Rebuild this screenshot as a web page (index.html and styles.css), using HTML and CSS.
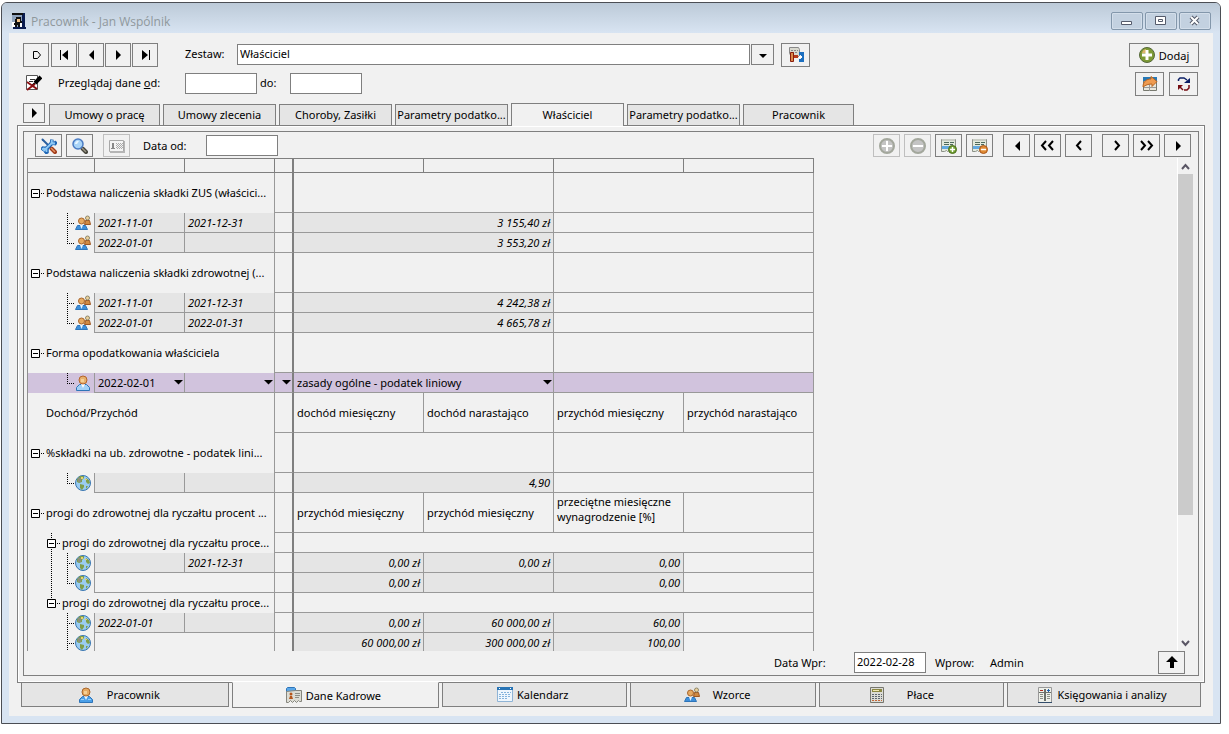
FILE: index.html
```html
<!DOCTYPE html>
<html lang="pl">
<head>
    <meta charset="UTF-8">
    <meta name="viewport" content="width=device-width, initial-scale=1.0">
    <title>Pracownik - Jan Wspólnik</title>
    <link rel="stylesheet" href="styles.css">
</head>
<body>
    <!-- Icon set -->
    <svg class="sprite" aria-hidden="true">
        <symbol id="app" viewBox="0 0 16 16">
            <path fill="#8fa3bd" d="M1 1h11v13H1z"/>
            <path fill="#0a1c50" d="M11 0h3v14h1v2H2v-2h9z"/>
            <path fill="#111" d="M1 0h11v2H1zM5 4h5v4h1v2H4V6h1z"/>
            <path fill="#f5c58a" d="M6 6h3v3H6z"/>
            <path fill="#fff" d="M1 9h3v5H1zM9 10h2v4H9z"/>
            <path fill="#111" d="M3 10h6v2H3zM4 12h2v2H4zM7 12h2v2H7z"/>
        </symbol>
        <symbol id="play" viewBox="0 0 16 16"><path d="M6 3v10l5-5z"/></symbol>
        <symbol id="back" viewBox="0 0 16 16"><path d="M11 3v10L6 8z"/></symbol>
        <symbol id="first" viewBox="0 0 16 16"><path d="M4 3h1v10H4zM12 3v10L6 8z"/></symbol>
        <symbol id="last" viewBox="0 0 16 16"><path d="M12 3h1v10h-1zM5 3v10l6-5z"/></symbol>
        <symbol id="start" viewBox="0 0 16 16"><path fill="none" stroke="#000" d="M5.500 4.500h4l3 3.500-3 3.500h-4z"/></symbol>
        <symbol id="down" viewBox="0 0 16 16"><path d="M4 7h8l-4 4z"/></symbol>
        <symbol id="up-arrow" viewBox="0 0 16 16"><path d="M8 2l6 6h-4v6H6V8H2z"/></symbol>
        <symbol id="lt" viewBox="0 0 16 16"><path fill="none" stroke="#000" stroke-width="2" d="M10 3L6 7.500l4 4.500"/></symbol>
        <symbol id="gt" viewBox="0 0 16 16"><path fill="none" stroke="#000" stroke-width="2" d="M7 3l4 4.500L7 12"/></symbol>
        <symbol id="ltlt" viewBox="0 0 16 16"><path fill="none" stroke="#000" stroke-width="2" d="M6 3L2 7.500 6 12M13 3L9 7.500l4 4.500"/></symbol>
        <symbol id="gtgt" viewBox="0 0 16 16"><path fill="none" stroke="#000" stroke-width="2" d="M2 3l4 4.500L2 12M9 3l4 4.500L9 12"/></symbol>
        <symbol id="set" viewBox="0 0 16 16">
            <path fill="#d9d9cf" stroke="#888" d="M1.500.500h9l1 2v7h-8l-2-3z"/>
            <path stroke="#888" stroke-dasharray="2 1" d="M3 3.500h7M4 5.500h5"/>
            <path fill="#d98a4b" stroke="#8a1c0c" d="M2.500 5.500h3v9h-3z"/>
            <path fill="#b5391a" d="M6 8h4v3H6z"/>
            <path fill="#1c6fc0" d="M11 5h5v10h-5v-3h2V8h-2z"/>
            <path fill="#fff" d="M11 9h3v2h-3z"/>
        </symbol>
        <symbol id="filter-off" viewBox="0 0 16 16">
            <path fill="#fff" stroke="#555" d="M.500.500h11v14H.500z"/>
            <path stroke="#333" d="M4 4.500h5M3 6.500h4"/>
            <path stroke="#000" stroke-width="4" d="M15 2L9 8"/>
            <path stroke="#000" stroke-width="2" d="M9 8l-3 3"/>
            <path stroke="#8b0f12" stroke-width="2" d="M1 7l10 7M9 9l-8 6"/>
        </symbol>
        <symbol id="add" viewBox="0 0 16 16">
            <circle cx="8" cy="8" r="7.500" fill="#7d9a35" stroke="#55683a"/>
            <path fill="#dbb56a" d="M3 6a5 5 0 0 1 4-4v4z"/>
            <path stroke="#fff" stroke-width="3" d="M8 3v10M3 8h10"/>
        </symbol>
        <symbol id="add-off" viewBox="0 0 16 16">
            <circle cx="8" cy="8" r="7" fill="#c4c4c4" stroke="#a3a79c" stroke-width="2"/>
            <path stroke="#fff" stroke-width="2" d="M8 3v10M3 8h10"/>
        </symbol>
        <symbol id="remove-off" viewBox="0 0 16 16">
            <circle cx="8" cy="8" r="7" fill="#c4c4c4" stroke="#a3a79c" stroke-width="2"/>
            <path stroke="#fff" stroke-width="2" d="M3 8h10"/>
        </symbol>
        <symbol id="note" viewBox="0 0 16 16">
            <path fill="#e3eadd" stroke="#8c9188" d="M.500 1.500h14v12h-2l-1-1-2 1-1-1-2 1-1-1-2 1H.500z"/>
            <path fill="#c9cdc4" d="M1 1h13v2H1z"/>
            <path stroke="#4f6a5c" stroke-dasharray="5 1" d="M3 4.500h10M3 6.500h9"/>
            <path stroke="#62a9e0" stroke-width="3" d="M1 9.500h9"/>
        </symbol>
        <symbol id="note-add" viewBox="0 0 16 16">
            <use href="#note"/>
            <circle cx="11.500" cy="11.500" r="4" fill="#71a12f" stroke="#4c6e20"/>
            <path stroke="#fff" stroke-width="1.500" d="M11.500 9v5M9 11.500h5"/>
        </symbol>
        <symbol id="note-remove" viewBox="0 0 16 16">
            <use href="#note"/>
            <circle cx="11.500" cy="11.500" r="4" fill="#e08a32" stroke="#a8541a"/>
            <path stroke="#fff" stroke-width="1.500" d="M9 11.500h5"/>
        </symbol>
        <symbol id="export" viewBox="0 0 16 16">
            <path fill="#e9e7dc" stroke="#77796f" d="M1.500 1.500h13v13h-13z"/>
            <path fill="#2678b6" d="M1 1h14v4H1z"/>
            <path stroke="#999" d="M2 11.500h12M7.500 8v7"/>
            <path fill="#ef9b50" stroke="#b8641f" d="M1 11c0-6 4-8 8-8V.500l6 5-5 5V8C6 8 4 9 1 11z"/>
        </symbol>
        <symbol id="refresh" viewBox="0 0 16 16">
            <path fill="none" stroke="#0b1f66" stroke-width="1.500" d="M2.500 5V3.500l1.500-1.500h4l3 2"/>
            <path fill="#0b1f66" d="M14 2v5H8z"/>
            <path fill="none" stroke="#750d12" stroke-width="1.500" d="M13 9v3l-2 2H8"/>
            <path fill="none" stroke="#750d12" stroke-width="1.500" d="M3 10l4 4"/>
            <path fill="#750d12" d="M2 9h5l-5 5z"/>
        </symbol>
        <symbol id="tools" viewBox="0 0 16 16">
            <path stroke="#2a5f9e" stroke-width="2" stroke-linecap="round" d="M1.500 1.500L9 9"/>
            <path stroke="#a03a18" stroke-width="4" stroke-linecap="round" d="M10.500 10.500L14 14"/>
            <path stroke="#e39464" stroke-width="1.500" d="M10 10l4 4"/>
            <path stroke="#1f66b5" stroke-width="4" d="M2.500 13.500L12 4"/>
            <path fill="none" stroke="#1f66b5" stroke-width="3.500" d="M11 1.500L10.500 5l3.500.500 1.500-2M.500 12L2 10l4 .500L6 14l-2 1.500"/>
            <path fill="none" stroke="#8fc9f5" stroke-width="1.800" d="M2.500 13L12 4M11 2l-.500 3 3.500.500M1 11.500L2.500 10.500l3 .500L5.500 14"/>
        </symbol>
        <symbol id="search" viewBox="0 0 16 16">
            <path stroke="#46443a" stroke-width="4" stroke-linecap="round" d="M10.500 10.500L14 14"/>
            <path stroke="#9b9787" stroke-width="1.500" d="M10 10l4 4"/>
            <circle cx="6" cy="6" r="5" fill="#a9d4f7" stroke="#4b7cc4" stroke-width="1.500"/>
            <path fill="#e9f6ff" d="M3 6a3 3 0 0 1 4-3l-2 3z"/>
        </symbol>
        <symbol id="card-off" viewBox="0 0 16 16">
            <path fill="#f4f4f4" stroke="#a8a8a8" d="M.500 2.500h14v11H.500z"/>
            <path stroke="#b5b5b5" stroke-width="2" d="M1 14h15V3"  fill="none"/>
            <path fill="#888" d="M3 5h2v5h1v1H2v-1h1z"/>
            <path stroke="#aaa" stroke-dasharray="1 1" d="M7 5.500h7M8 6.500h6M7 7.500h7M8 8.500h6M7 9.500h7M8 10.500h6"/>
        </symbol>
        <symbol id="person" viewBox="0 0 16 16">
            <path fill="#4a9fe8" stroke="#2e74b8" d="M1.500 15.500v-3l3-3h7l3 3v3z"/>
            <path fill="#e9f4fd" d="M6 9h4l-2 4z"/>
            <path stroke="#9bd0fa" d="M3 12.500h3M10 12.500h3"/>
            <circle cx="8" cy="5" r="4" fill="#e6aa62" stroke="#a9662c"/>
            <path fill="#f6cf95" d="M6 4h3v3H6z"/>
        </symbol>
        <symbol id="person-light" viewBox="0 0 16 16">
            <path fill="#a3d1f7" stroke="#2e74b8" d="M1.500 15.500v-3l3-3h7l3 3v3z"/>
            <path fill="#fff" d="M6 9h4l-2 4z"/>
            <circle cx="8" cy="5" r="4" fill="#e6b06e" stroke="#b5652a"/>
            <path fill="#f6cf95" d="M6 4h3v3H6z"/>
        </symbol>
        <symbol id="people" viewBox="0 0 16 16">
            <path fill="#d08a42" stroke="#9c5620" d="M9.500 9.500l1-4h4l1 4z"/>
            <circle cx="12.500" cy="3" r="2" fill="#ead09c" stroke="#8f8769"/>
            <path fill="#3d8fdb" stroke="#2e74b8" d="M.500 14.500l2-4h8l2 4z"/>
            <path fill="#e9f4fd" d="M5 10h3l-1.500 4z"/>
            <circle cx="6.500" cy="6" r="3" fill="#e6aa62" stroke="#a9662c"/>
        </symbol>
        <symbol id="globe" viewBox="0 0 16 16">
            <circle cx="8" cy="8" r="7.500" fill="#9accf2" stroke="#3976b0"/>
            <path fill="#7e9e4e" d="M2 4l3-3h4v2L7 5v2L4 8 2 7zM11 3l3 2 1 3-2 1-2-2zM5 9l4 1v2l-2 3-2-2zM11 11h2l-2 3z"/>
            <path fill="#e9d36a" d="M6 2h2v2H6zM10 4h2v1h-2z"/>
            <path fill="#8b8f7c" d="M3 3h3v4H3z"/>
        </symbol>
        <symbol id="file" viewBox="0 0 16 16">
            <path fill="#5aa7e8" stroke="#2e74b8" d="M.500 13.500v-12l1-1h7l1 1v4z"/>
            <path fill="#dcdcd4" stroke="#85857d" d="M.500 4.500l9-1h6v11h-2l-1-1-2 2-2-2-2 2-2-2-2 2h-2z"/>
            <circle cx="5" cy="7" r="1.500" fill="#b5561b"/>
            <path fill="#b5561b" d="M3 12l1-3h2l1 3z"/>
            <path stroke="#8d8d85" d="M9 6.500h5M9 8.500h5M9 10.500h4"/>
        </symbol>
        <symbol id="calendar" viewBox="0 0 16 16">
            <path fill="#eef6fd" stroke="#8fb4d6" d="M.500.500h15v14H.500z"/>
            <path fill="#2874b5" d="M0 0h16v3H0z"/>
            <path stroke="#fff" d="M2 1.500h1M13 1.500h1"/>
            <path stroke="#84b3dc" stroke-dasharray="2 1" d="M4 5.500h10M2 7.500h12M2 9.500h12M2 11.500h9"/>
        </symbol>
        <symbol id="calc" viewBox="0 0 16 16">
            <path fill="#dcdcd6" stroke="#77776f" d="M1.500.500h13v15h-13z"/>
            <path fill="#8b8742" d="M3 2h10v3H3z"/>
            <path fill="#f3e9b0" d="M4 3h6v1H4z"/>
            <path stroke="#5d6670" stroke-dasharray="2 1" d="M3 7.500h10M3 9.500h10M3 11.500h10"/>
            <path stroke="#c4683a" stroke-dasharray="2 1" d="M3 13.500h10"/>
        </symbol>
        <symbol id="ledger" viewBox="0 0 16 16">
            <path fill="#eef0ea" stroke="#999" d="M1.500.500h13v15h-13z"/>
            <path fill="#6d716c" d="M7 2h2v12H7zM2 5h12v1H2z"/>
            <path stroke="#b32a1b" d="M3 3.500h3"/>
            <path stroke="#1c5fae" d="M10 3.500h3M11.500 2v3"/>
            <path stroke="#8a8f88" d="M3 7.500h3M3 9.500h3M3 11.500h3M10 7.500h3M10 9.500h3M10 11.500h3"/>
            <path stroke="#334d6b" d="M1 15.500h14"/>
        </symbol>
        <!-- Tree lines -->
        <g id="dots-mid" stroke="#000" stroke-dasharray="1 1"><path d="M39.500 0v20M41 10.500h6"/></g>
        <g id="dots-end" stroke="#000" stroke-dasharray="1 1"><path d="M39.500 0v11M41 10.500h6"/></g>
        <g id="dots-outer" stroke="#000" stroke-dasharray="1 1"><path d="M23.500 0v20"/></g>
        <symbol id="minus-box" viewBox="0 0 14 10">
            <path fill="#fff" stroke="#000" d="M.500.500h8v8h-8z"/>
            <path stroke="#000" d="M2 4.500h5"/>
            <path stroke="#000" stroke-dasharray="1 1" d="M10 4.500h3"/>
        </symbol>
    </svg>

    <div class="window">
        <header class="title-bar">
            <svg class="icon"><use href="#app"/></svg>
            <h1>Pracownik - Jan Wspólnik</h1>
            <div class="window-buttons">
                <button type="button" aria-label="Minimalizuj"><svg width="12" height="12"><path fill="#fff" stroke="#555b6b" d="M.500 6.500h10v3H.500z"/></svg></button>
                <button type="button" aria-label="Maksymalizuj"><svg width="12" height="12"><path fill="#fff" stroke="#555b6b" d="M.500 1.500h10v8H.500zM3.500 4.500h4v2h-4z"/></svg></button>
                <button type="button" aria-label="Zamknij"><svg width="12" height="12"><path stroke="#555b6b" stroke-width="4" d="M2 2l7 7M9 2L2 9"/><path stroke="#fff" stroke-width="2" d="M2 2l7 7M9 2L2 9"/></svg></button>
            </div>
        </header>

        <main class="content">
            <div class="toolbar">
                <div class="row">
                    <div class="nav-buttons">
                        <button type="button" class="btn start" aria-label="Początek"><svg class="icon"><use href="#start"/></svg></button>
                        <button type="button" class="btn" aria-label="Pierwszy"><svg class="icon"><use href="#first"/></svg></button>
                        <button type="button" class="btn" aria-label="Poprzedni"><svg class="icon"><use href="#back"/></svg></button>
                        <button type="button" class="btn" aria-label="Następny"><svg class="icon"><use href="#play"/></svg></button>
                        <button type="button" class="btn" aria-label="Ostatni"><svg class="icon"><use href="#last"/></svg></button>
                    </div>
                    <label class="set-label" for="zestaw">Zestaw:</label>
                    <input class="field set-field" id="zestaw" type="text" value="Właściciel">
                    <button type="button" class="btn drop" aria-label="Rozwiń"><svg class="icon"><use href="#down"/></svg></button>
                    <button type="button" class="btn wide" aria-label="Zestawy"><svg class="icon"><use href="#set"/></svg></button>
                    <button type="button" class="btn add push"><svg class="icon"><use href="#add"/></svg>Dodaj</button>
                </div>
                <div class="row">
                    <svg class="icon filter"><use href="#filter-off"/></svg>
                    <label class="from-label" for="od">Przeglądaj dane <u>o</u>d:</label>
                    <input class="field date" id="od" type="text">
                    <label class="to-label" for="do">do:</label>
                    <input class="field date" id="do" type="text">
                    <div class="side-buttons push">
                        <button type="button" class="btn wide" aria-label="Eksport"><svg class="icon"><use href="#export"/></svg></button>
                        <button type="button" class="btn wide" aria-label="Odśwież"><svg class="icon"><use href="#refresh"/></svg></button>
                    </div>
                </div>
            </div>

            <nav class="tabs">
                <button type="button" class="btn tab-scroll" aria-label="Przewiń zakładki"><svg class="icon"><use href="#play"/></svg></button>
                <button type="button" class="tab narrow">Umowy o pracę</button>
                <button type="button" class="tab">Umowy zlecenia</button>
                <button type="button" class="tab">Choroby, Zasiłki</button>
                <button type="button" class="tab">Parametry podatko...</button>
                <button type="button" class="tab active">Właściciel</button>
                <button type="button" class="tab">Parametry podatko...</button>
                <button type="button" class="tab narrow">Pracownik</button>
            </nav>

            <section class="panel">
                <div class="inner">
                    <div class="grid-tools">
                        <button type="button" class="btn tool" aria-label="Narzędzia"><svg class="icon"><use href="#tools"/></svg></button>
                        <button type="button" class="btn tool" aria-label="Szukaj"><svg class="icon"><use href="#search"/></svg></button>
                        <button type="button" class="btn tool spaced" disabled aria-label="Karta"><svg class="icon"><use href="#card-off"/></svg></button>
                        <label class="date-label" for="data-od">Data od:</label>
                        <input class="field date" id="data-od" type="text">
                        <button type="button" class="btn tool push" disabled aria-label="Dodaj wiersz"><svg class="icon"><use href="#add-off"/></svg></button>
                        <button type="button" class="btn tool" disabled aria-label="Usuń wiersz"><svg class="icon"><use href="#remove-off"/></svg></button>
                        <button type="button" class="btn tool" aria-label="Dodaj zapis"><svg class="icon"><use href="#note-add"/></svg></button>
                        <button type="button" class="btn tool" aria-label="Usuń zapis"><svg class="icon"><use href="#note-remove"/></svg></button>
                        <button type="button" class="btn tool spaced" aria-label="Na początek"><svg class="icon"><use href="#back"/></svg></button>
                        <button type="button" class="btn tool" aria-label="Strona wstecz"><svg class="icon"><use href="#ltlt"/></svg></button>
                        <button type="button" class="btn tool" aria-label="Wstecz"><svg class="icon"><use href="#lt"/></svg></button>
                        <button type="button" class="btn tool spaced" aria-label="Dalej"><svg class="icon"><use href="#gt"/></svg></button>
                        <button type="button" class="btn tool" aria-label="Strona dalej"><svg class="icon"><use href="#gtgt"/></svg></button>
                        <button type="button" class="btn tool" aria-label="Na koniec"><svg class="icon"><use href="#play"/></svg></button>
                    </div>

                    <div class="grid-area">
                        <table class="grid">
                            <colgroup>
                                <col class="c-tree"><col class="c-date"><col class="c-date"><col class="c-mark">
                                <col class="c-val"><col class="c-val"><col class="c-val"><col class="c-val">
                            </colgroup>
                            <thead>
                                <tr><th></th><th></th><th></th><th class="split"></th><th></th><th></th><th></th><th></th></tr>
                            </thead>
                            <tbody>
                                <tr class="group">
                                    <td class="name" colspan="3"><div class="node"><svg class="box"><use href="#minus-box"/></svg>Podstawa naliczenia składki ZUS (właścici...</div></td>
                                    <td class="split"></td><td colspan="2"></td><td colspan="2"></td>
                                </tr>
                                <tr>
                                    <td class="tree"><svg class="branch"><use href="#dots-mid"/></svg><svg class="icon"><use href="#people"/></svg></td>
                                    <td class="gray">2021-11-01</td><td class="gray">2021-12-31</td>
                                    <td class="split"></td><td class="gray num" colspan="2">3 155,40 zł</td><td colspan="2"></td>
                                </tr>
                                <tr>
                                    <td class="tree"><svg class="branch"><use href="#dots-end"/></svg><svg class="icon"><use href="#people"/></svg></td>
                                    <td class="gray">2022-01-01</td><td class="gray"></td>
                                    <td class="split"></td><td class="gray num" colspan="2">3 553,20 zł</td><td colspan="2"></td>
                                </tr>

                                <tr class="group">
                                    <td class="name" colspan="3"><div class="node"><svg class="box"><use href="#minus-box"/></svg>Podstawa naliczenia składki zdrowotnej (...</div></td>
                                    <td class="split"></td><td colspan="2"></td><td colspan="2"></td>
                                </tr>
                                <tr>
                                    <td class="tree"><svg class="branch"><use href="#dots-mid"/></svg><svg class="icon"><use href="#people"/></svg></td>
                                    <td class="gray">2021-11-01</td><td class="gray">2021-12-31</td>
                                    <td class="split"></td><td class="gray num" colspan="2">4 242,38 zł</td><td colspan="2"></td>
                                </tr>
                                <tr>
                                    <td class="tree"><svg class="branch"><use href="#dots-end"/></svg><svg class="icon"><use href="#people"/></svg></td>
                                    <td class="gray">2022-01-01</td><td class="gray">2022-01-31</td>
                                    <td class="split"></td><td class="gray num" colspan="2">4 665,78 zł</td><td colspan="2"></td>
                                </tr>

                                <tr class="group">
                                    <td class="name" colspan="3"><div class="node"><svg class="box"><use href="#minus-box"/></svg>Forma opodatkowania właściciela</div></td>
                                    <td class="split"></td><td colspan="2"></td><td colspan="2"></td>
                                </tr>
                                <tr class="selected">
                                    <td class="tree"><svg class="branch"><use href="#dots-end"/></svg><svg class="icon"><use href="#person-light"/></svg></td>
                                    <td><select aria-label="Data od"><option>2022-02-01</option></select></td>
                                    <td><select aria-label="Data do"><option></option></select></td>
                                    <td class="split"><select aria-label="Znacznik"><option></option></select></td>
                                    <td colspan="2"><select aria-label="Forma opodatkowania"><option>zasady ogólne - podatek liniowy</option></select></td>
                                    <td colspan="2"></td>
                                </tr>
                                <tr class="group">
                                    <td class="name" colspan="3"><div class="node leaf">Dochód/Przychód</div></td>
                                    <td class="split"></td><td>dochód miesięczny</td><td>dochód narastająco</td><td>przychód miesięczny</td><td>przychód narastająco</td>
                                </tr>

                                <tr class="group">
                                    <td class="name" colspan="3"><div class="node"><svg class="box"><use href="#minus-box"/></svg>%składki na ub. zdrowotne - podatek lini...</div></td>
                                    <td class="split"></td><td colspan="2"></td><td colspan="2"></td>
                                </tr>
                                <tr>
                                    <td class="tree"><svg class="branch"><use href="#dots-end"/></svg><svg class="icon"><use href="#globe"/></svg></td>
                                    <td class="gray"></td><td class="gray"></td>
                                    <td class="split"></td><td class="gray num" colspan="2">4,90</td><td colspan="2"></td>
                                </tr>

                                <tr class="group">
                                    <td class="name" colspan="3"><div class="node"><svg class="box"><use href="#minus-box"/></svg>progi do zdrowotnej dla ryczałtu procent ...</div></td>
                                    <td class="split"></td><td>przychód miesięczny</td><td>przychód miesięczny</td><td class="two-line">przeciętne miesięczne wynagrodzenie [%]</td><td></td>
                                </tr>
                                <tr>
                                    <td class="name" colspan="3"><div class="node sub"><svg class="box"><use href="#minus-box"/></svg>progi do zdrowotnej dla ryczałtu proce...</div></td>
                                    <td class="split"></td><td colspan="4"></td>
                                </tr>
                                <tr>
                                    <td class="tree"><svg class="branch"><use href="#dots-outer"/><use href="#dots-mid"/></svg><svg class="icon"><use href="#globe"/></svg></td>
                                    <td class="gray"></td><td class="gray">2021-12-31</td>
                                    <td class="split"></td><td class="gray num">0,00 zł</td><td class="gray num">0,00 zł</td><td class="gray num">0,00</td><td></td>
                                </tr>
                                <tr>
                                    <td class="tree"><svg class="branch"><use href="#dots-outer"/><use href="#dots-end"/></svg><svg class="icon"><use href="#globe"/></svg></td>
                                    <td colspan="2"></td>
                                    <td class="split"></td><td class="gray num">0,00 zł</td><td class="gray"></td><td class="gray num">0,00</td><td></td>
                                </tr>
                                <tr>
                                    <td class="name" colspan="3"><div class="node sub last"><svg class="box"><use href="#minus-box"/></svg>progi do zdrowotnej dla ryczałtu proce...</div></td>
                                    <td class="split"></td><td colspan="4"></td>
                                </tr>
                                <tr>
                                    <td class="tree"><svg class="branch"><use href="#dots-mid"/></svg><svg class="icon"><use href="#globe"/></svg></td>
                                    <td class="gray">2022-01-01</td><td class="gray"></td>
                                    <td class="split"></td><td class="gray num">0,00 zł</td><td class="gray num">60 000,00 zł</td><td class="gray num">60,00</td><td></td>
                                </tr>
                                <tr>
                                    <td class="tree"><svg class="branch"><use href="#dots-mid"/></svg><svg class="icon"><use href="#globe"/></svg></td>
                                    <td colspan="2"></td>
                                    <td class="split"></td><td class="gray num">60 000,00 zł</td><td class="gray num">300 000,00 zł</td><td class="gray num">100,00</td><td></td>
                                </tr>
                            </tbody>
                        </table>
                        <div class="scrollbar">
                            <svg width="15" height="16"><path fill="none" stroke="#5a5665" stroke-width="2" d="M4 11l3.500-4 3.500 4"/></svg>
                            <div class="track"><div class="thumb"></div></div>
                            <svg width="15" height="16"><path fill="none" stroke="#5a5665" stroke-width="2" d="M4 6l3.500 4L11 6"/></svg>
                        </div>
                    </div>

                    <div class="entry">
                        <label for="data-wpr">Data Wpr:</label>
                        <input class="field date" id="data-wpr" type="text" value="2022-02-28">
                        <span class="entry-label">Wprow:</span>
                        <span class="entry-user">Admin</span>
                        <button type="button" class="btn tool" aria-label="Do góry"><svg class="icon"><use href="#up-arrow"/></svg></button>
                    </div>
                </div>
            </section>

            <nav class="bottom-tabs">
                <button type="button" class="tab large"><svg class="icon"><use href="#person"/></svg><span class="far">Pracownik</span></button>
                <button type="button" class="tab large active"><svg class="icon"><use href="#file"/></svg><span>Dane Kadrowe</span></button>
                <button type="button" class="tab"><svg class="icon"><use href="#calendar"/></svg><span>Kalendarz</span></button>
                <button type="button" class="tab"><svg class="icon"><use href="#people"/></svg><span class="far">Wzorce</span></button>
                <button type="button" class="tab"><svg class="icon"><use href="#calc"/></svg><span class="farther">Płace</span></button>
                <button type="button" class="tab medium"><svg class="icon"><use href="#ledger"/></svg><span>Księgowania i analizy</span></button>
            </nav>
        </main>
    </div>
</body>
</html>
```
FILE: styles.css
```css
/* General Styling */
* {
    box-sizing: border-box;
}

body {
    margin: 0;
    padding: 2px 8px 10px 1px;
    height: 100vh;
    display: flex;
    background: #fff;
    color: #000;
    font-family: "Noto Sans", "Open Sans", sans-serif;
    font-size: 11px;
    line-height: 15px;
}

button, input, select {
    font: inherit;
    color: inherit;
    margin: 0;
}

.sprite {
    position: absolute;
    width: 0;
    height: 0;
}

.icon {
    width: 16px;
    height: 16px;
    flex: none;
    display: block;
}

/* Window frame */
.window {
    flex: 1;
    min-width: 0;
    display: flex;
    flex-direction: column;
    background: #d8e4f2;
    border: 1px solid #4b4e54;
    border-radius: 6px 6px 0 0;
    padding: 0 7px 7px;
}

.title-bar {
    display: flex;
    align-items: center;
    height: 30px;
    margin: 0 -7px;
    padding: 6px 9px 0;
    border-radius: 5px 5px 0 0;
    background: linear-gradient(#bccad8, #d8e4f2);
}

.title-bar h1 {
    margin: 0 0 0 4px;
    font-family: "Open Sans", sans-serif;
    font-size: 12px;
    font-weight: normal;
    color: #8f989c;
}

.window-buttons {
    display: flex;
    gap: 2px;
    margin-left: auto;
}

.window-buttons button {
    display: flex;
    align-items: center;
    justify-content: center;
    width: 32px;
    height: 18px;
    padding: 0;
    border: 1px solid #8397ab;
    border-radius: 2px;
    background: #c3d1e0;
    box-shadow: inset 0 0 0 1px #d3deea;
}

.content {
    flex: 1;
    min-height: 0;
    display: flex;
    flex-direction: column;
    padding-bottom: 8px;
    background: #f1f1f1;
}

/* Shared controls */
.btn {
    display: flex;
    align-items: center;
    justify-content: center;
    flex: none;
    width: 26px;
    height: 24px;
    padding: 0;
    border: 1px solid #7f7f7f;
    background: #f1f1f1;
}

.btn:disabled {
    border-color: #bfbfbf;
}

.wide {
    width: 29px;
}

.tool {
    width: 27px;
    height: 23px;
}

.field {
    height: 21px;
    padding: 0 2px 2px;
    border: 1px solid #7f7f7f;
    border-radius: 0;
    background: #fff;
}

.date {
    flex: none;
    width: 72px;
}

.push {
    margin-left: auto;
}

/* Top toolbar */
.toolbar {
    display: flex;
    flex-direction: column;
    gap: 5px;
    padding: 10px 14px 7px;
}

.row {
    display: flex;
    align-items: center;
    height: 24px;
}

.row label {
    padding-bottom: 3px;
}

.row .field {
    margin-bottom: 1px;
}

.nav-buttons {
    display: flex;
    gap: 1px;
    margin-right: 27px;
}

.start {
    margin-right: 1px;
}

.set-label {
    width: 52px;
}

.set-field {
    flex: 0 1 513px;
    min-width: 0;
}

.drop {
    width: 23px;
    height: 21px;
    margin: 0 7px 1px 1px;
}

.add {
    width: 70px;
    gap: 4px;
}

.filter {
    margin: 0 16px 2px 3px;
}

.from-label {
    width: 127px;
}

.to-label {
    width: 33px;
    padding-left: 3px;
}

.side-buttons {
    display: flex;
    gap: 5px;
    margin-right: 1px;
}

/* Tabs above the panel */
.tabs {
    display: flex;
    align-items: flex-end;
    gap: 3px;
    height: 22px;
    padding: 0 14px;
}

.tab-scroll {
    width: 22px;
    height: 20px;
    margin-right: 1px;
    align-self: flex-start;
}

.tab {
    flex: 0 1 113px;
    min-width: 0;
    height: 21px;
    padding: 0 1px 1px;
    border: 1px solid #7f7f7f;
    border-bottom: 0;
    background: #e5e5e5;
    white-space: nowrap;
}

.narrow {
    flex-basis: 111px;
}

.tabs .active {
    position: relative;
    height: 23px;
    margin-bottom: -1px;
    background: #f1f1f1;
}

/* Panel with the grid */
.panel {
    flex: 1;
    min-height: 0;
    display: flex;
    margin: 0 8px;
    padding: 5px 5px 6px;
    border: 1px solid #7f7f7f;
    box-shadow: inset 0 0 0 1px #fff;
}

.inner {
    flex: 1;
    min-width: 0;
    display: flex;
    flex-direction: column;
    border: 1px solid #7f7f7f;
}

.grid-tools {
    display: flex;
    align-items: center;
    gap: 4px;
    padding: 2px 7px 1px 11px;
}

.spaced {
    margin-left: 6px;
}

.date-label {
    width: 59px;
    margin-left: 9px;
    padding-bottom: 1px;
}

.grid-area {
    flex: 1;
    min-height: 0;
    overflow: hidden;
    display: flex;
    align-items: flex-start;
    justify-content: space-between;
    padding: 0 5px 0 3px;
}

.grid {
    flex: none;
    width: 787px;
    table-layout: fixed;
    border-spacing: 0;
    border-left: 1px solid #8f8f8f;
}

.c-tree { width: 67px; }
.c-date { width: 90px; }
.c-mark { width: 19px; }
.c-val { width: 130px; }

.grid th {
    height: 15px;
    padding: 0;
    border: solid #7f7f7f;
    border-width: 1px 1px 1px 0;
}

.grid td {
    height: 20px;
    padding: 0 3px;
    border: solid #999;
    border-width: 0 1px 1px 0;
    line-height: 15px;
    vertical-align: middle;
}

.grid .group td {
    height: 40px;
}

.grid .split {
    border-right: 2px solid #7f7f7f;
}

.grid .name {
    padding: 0;
    border-bottom: 0;
}

.grid .tree {
    padding: 0;
    border-bottom: 0;
    line-height: 0;
}

.grid .group .two-line {
    padding-bottom: 8px;
}

.grid .gray {
    background: #e5e5e5;
    font-style: italic;
}

.grid .num {
    text-align: right;
}

.grid .selected td {
    background: #d1c3dd;
    padding-right: 1px;
}

.grid .selected .tree {
    padding-right: 0;
}

.branch {
    width: 47px;
    height: 20px;
    display: inline-block;
    vertical-align: middle;
}

.tree .icon {
    display: inline-block;
    vertical-align: middle;
}

.node {
    display: flex;
    align-items: center;
    height: 20px;
    padding: 0 0 2px 3px;
    white-space: nowrap;
    overflow: hidden;
}

.leaf {
    padding-left: 18px;
}

/* Nested group with the dotted line of its parent */
.sub {
    padding-left: 19px;
    background: repeating-linear-gradient(#000 0 1px, transparent 1px 2px) 23px 0 / 1px 20px no-repeat;
}

.sub.last {
    background-size: 1px 10px;
}

.box {
    flex: none;
    width: 14px;
    height: 10px;
    margin: 4px 1px 0 0;
}

/* Drop-downs inside the selected row */
.grid select {
    display: block;
    width: 100%;
    height: 19px;
    padding: 0 0 1px;
    border: 0;
    appearance: none;
    background: url("data:image/svg+xml,%3Csvg xmlns='http://www.w3.org/2000/svg' width='9' height='5'%3E%3Cpath d='M0 0h9L4.500 4.500z'/%3E%3C/svg%3E") no-repeat right center;
}

/* Scrollbar */
.scrollbar {
    align-self: stretch;
    display: flex;
    flex-direction: column;
    width: 16px;
    border-left: 1px solid #fff;
}

.track {
    flex: 1;
}

.thumb {
    height: 74%;
    background: #cbcbcb;
}

/* Entry info under the grid */
.entry {
    display: flex;
    align-items: center;
    justify-content: flex-end;
    height: 24px;
    padding: 0 13px 2px 0;
}

.entry label {
    width: 80px;
}

.entry-label {
    width: 55px;
    margin-left: 9px;
}

.entry-user {
    width: 168px;
}

/* Bottom tabs */
.bottom-tabs {
    display: flex;
    gap: 3px;
    height: 26px;
    margin-top: -1px;
    padding: 0 12px;
}

.bottom-tabs .tab {
    display: flex;
    align-items: center;
    justify-content: center;
    gap: 4px;
    flex: 185 1 0;
    height: 25px;
    padding: 0 4px 0 0;
    border: 1px solid #7f7f7f;
}

.bottom-tabs .large {
    flex-grow: 208;
}

.bottom-tabs .medium {
    flex-grow: 194;
}

.bottom-tabs .active {
    position: relative;
    height: 26px;
    border-top-color: #f1f1f1;
    background: #f1f1f1;
}

.far {
    padding: 0 8px 0 9px;
}

.farther {
    padding: 0 16px 0 18px;
}
```
